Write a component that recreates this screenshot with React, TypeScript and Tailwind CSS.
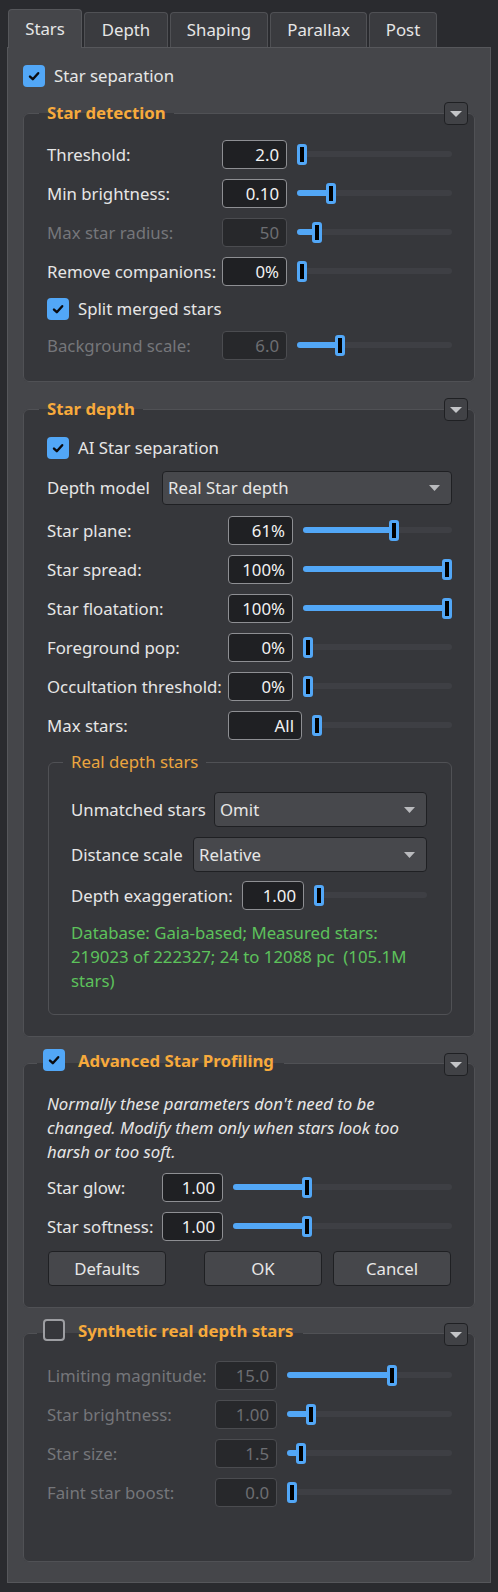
import React from 'react';

type Kids = { children?: React.ReactNode };

function Check({ on = true }: { on?: boolean }) {
  if (!on) {
    return <span className="block h-[22px] w-[22px] shrink-0 rounded-[4px] border-2 border-[#9d9ea2] bg-[#36373b]" />;
  }
  return (
    <span className="flex h-[22px] w-[22px] shrink-0 items-center justify-center rounded-[4px] bg-[#52a7f7]">
      <svg width="22" height="22" viewBox="0 0 22 22">
        <path d="M7 11.6 L9.8 14.2 L15.2 8.2" fill="none" stroke="#0b0c10" strokeWidth="2.4" strokeLinecap="round" strokeLinejoin="round" />
      </svg>
    </span>
  );
}

function CollapseBtn({ top }: { top: string }) {
  return (
    <div className={`absolute right-[7px] ${top} flex h-[23px] w-[24px] items-center justify-center rounded-[4px] border border-[#1f2023] bg-[#414246]`}>
      <svg width="12" height="6" viewBox="0 0 12 6">
        <path d="M0 0 H12 L6 6 Z" fill="#c4c5c8" />
      </svg>
    </div>
  );
}

function NumBox({ value, w, off = false }: { value: string; w: string; off?: boolean }) {
  return (
    <div
      className={`${w} h-[29px] shrink-0 rounded-[4px] border pr-[7px] text-right leading-[27px] ${
        off ? 'border-[#4b4c50] bg-[#27282b] text-[#6d6e72]' : 'border-[#8e8f93] bg-[#1f2023] text-[#f2f2f2]'
      }`}
    >
      {value}
    </div>
  );
}

function Slider({ v }: { v: number }) {
  return (
    <div className="relative ml-[10px] h-[29px] flex-1">
      <div className="absolute inset-x-0 top-[11px] h-[6px] rounded-full bg-[#3e3f44]" />
      {v > 0 && (
        <div
          className="absolute left-0 top-[11px] h-[6px] rounded-full bg-[#52a7f7]"
          style={{ width: `calc(${v} * (100% - 10px) + 6px)` }}
        />
      )}
      <div
        className="absolute top-[4px] h-[21px] w-[10px] rounded-[3px] border-[3px] border-[#52a7f7] bg-black"
        style={{ left: `calc(${v} * (100% - 10px))` }}
      />
    </div>
  );
}

function NumRow({ label, lw, iw, value, v, off = false }: { label: string; lw: string; iw: string; value: string; v: number; off?: boolean }) {
  return (
    <div className="flex h-[29px] items-center">
      <span className={`${lw} shrink-0 whitespace-nowrap ${off ? 'text-[#75767a]' : ''}`}>{label}</span>
      <NumBox value={value} w={iw} off={off} />
      <Slider v={v} />
    </div>
  );
}

function Combo({ value }: { value: string }) {
  return (
    <div className="flex h-full flex-1 items-center justify-between rounded-[4px] border border-[#1f2023] bg-[#47484c] pl-[5px] pr-[11px]">
      <span>{value}</span>
      <svg width="11" height="6" viewBox="0 0 11 6">
        <path d="M0 0 H11 L5.5 6 Z" fill="#b9babd" />
      </svg>
    </div>
  );
}

function CheckRow({ label }: { label: string }) {
  return (
    <div className="flex h-[25px] items-center gap-[9px]">
      <Check />
      <span>{label}</span>
    </div>
  );
}

function Btn({ label, cls }: { label: string; cls?: string }) {
  return (
    <div className={`flex h-[35px] w-[118px] items-center justify-center rounded-[4px] border border-[#1f2023] bg-[#46474b] ${cls ?? ''}`}>
      {label}
    </div>
  );
}

function TitleLegend({ title }: { title: string }) {
  return <legend className="ml-[-8px] px-[8px] font-bold leading-[22px] text-[#f7aa3c]">{title}</legend>;
}

function CheckLegend({ title, on }: { title: string; on: boolean }) {
  return (
    <legend className="ml-[-10px] pl-[6px] pr-[10px]">
      <div className="flex h-[29px] items-start gap-[13px]">
        <Check on={on} />
        <span className="font-bold leading-[24px] text-[#f7aa3c]">{title}</span>
      </div>
    </legend>
  );
}

function Group({ legend, wrap, box, btnTop, children }: Kids & { legend: React.ReactNode; wrap: string; box: string; btnTop: string }) {
  return (
    <div className={`relative ${wrap}`}>
      <fieldset className={`rounded-[6px] border border-[#505155] bg-[#36373b] pl-[23px] pr-[22px] ${box}`}>
        {legend}
        {children}
      </fieldset>
      <CollapseBtn top={btnTop} />
    </div>
  );
}

const tabs = [
  { name: 'Stars', w: 'w-[74px]' },
  { name: 'Depth', w: 'w-[84px]' },
  { name: 'Shaping', w: 'w-[98px]' },
  { name: 'Parallax', w: 'w-[97px]' },
  { name: 'Post', w: 'w-[68px]' },
];

export default function App() {
  return (
    <div className="h-[1592px] w-[498px] overflow-hidden bg-[#2a2b2f] pt-[9px] font-['Noto_Sans',_'Open_Sans',_sans-serif] text-[16.8px] text-[#e6e6e6]">
      <div className="flex h-[38px] items-end gap-[2px] pl-[8px]">
        {tabs.map((t, i) =>
          i === 0 ? (
            <div
              key={t.name}
              className={`${t.w} relative z-10 -mb-px flex h-[39px] items-center justify-center rounded-t-[4px] border border-b-0 border-[#56575b] bg-[#45464a]`}
            >
              {t.name}
            </div>
          ) : (
            <div
              key={t.name}
              className={`${t.w} flex h-[35px] items-center justify-center rounded-t-[4px] border border-b-0 border-[#505155] bg-[#3a3b3f]`}
            >
              {t.name}
            </div>
          ),
        )}
      </div>

      <div className="mx-[7px] border border-[#56575b] bg-[#45464a] px-[15px] pb-[20px] pt-[16px]">
        <div className="flex h-[23px] items-center gap-[9px]">
          <Check />
          <span>Star separation</span>
        </div>

        <Group legend={<TitleLegend title="Star detection" />} wrap="mt-[15px]" box="pt-[16px] pb-[21px]" btnTop="top-0">
          <div className="flex flex-col gap-[10px]">
            <NumRow label="Threshold:" lw="w-[175px]" iw="w-[65px]" value="2.0" v={0} />
            <NumRow label="Min brightness:" lw="w-[175px]" iw="w-[65px]" value="0.10" v={0.2} />
            <NumRow label="Max star radius:" lw="w-[175px]" iw="w-[65px]" value="50" v={0.1} off />
            <NumRow label="Remove companions:" lw="w-[175px]" iw="w-[65px]" value="0%" v={0} />
            <CheckRow label="Split merged stars" />
            <NumRow label="Background scale:" lw="w-[175px]" iw="w-[65px]" value="6.0" v={0.264} off />
          </div>
        </Group>

        <Group legend={<TitleLegend title="Star depth" />} wrap="mt-[16px]" box="pt-[15px] pb-[21px]" btnTop="top-0">
          <div className="flex flex-col gap-[10px]">
            <CheckRow label="AI Star separation" />
            <div className="mt-px flex h-[34px] items-center">
              <span className="w-[115px] shrink-0">Depth model</span>
              <Combo value="Real Star depth" />
            </div>
            <div className="mt-px">
              <NumRow label="Star plane:" lw="w-[181px]" iw="w-[65px]" value="61%" v={0.616} />
            </div>
            <NumRow label="Star spread:" lw="w-[181px]" iw="w-[65px]" value="100%" v={1} />
            <NumRow label="Star floatation:" lw="w-[181px]" iw="w-[65px]" value="100%" v={1} />
            <NumRow label="Foreground pop:" lw="w-[181px]" iw="w-[65px]" value="0%" v={0} />
            <NumRow label="Occultation threshold:" lw="w-[181px]" iw="w-[65px]" value="0%" v={0} />
            <NumRow label="Max stars:" lw="w-[181px]" iw="w-[74px]" value="All" v={0} />

            <fieldset className="ml-px mt-px rounded-[6px] border border-[#505155] pb-[21px] pl-[22px] pr-[24px] pt-[19px]">
              <legend className="ml-[-8px] px-[8px] leading-[22px] text-[#eba53f]">Real depth stars</legend>
              <div className="flex h-[35px] items-center">
                <span className="w-[143px] shrink-0">Unmatched stars</span>
                <Combo value="Omit" />
              </div>
              <div className="mt-[10px] flex h-[35px] items-center">
                <span className="w-[122px] shrink-0">Distance scale</span>
                <Combo value="Relative" />
              </div>
              <div className="mt-[9px]">
                <NumRow label="Depth exaggeration:" lw="w-[171px]" iw="w-[62px]" value="1.00" v={0} />
              </div>
              <p className="mt-[11px] leading-[24px] text-[#5dc25b]">
                Database: Gaia-based; Measured stars:
                <br />
                219023 of 222327; 24 to 12088 pc&nbsp; (105.1M
                <br />
                stars)
              </p>
            </fieldset>
          </div>
        </Group>

        <Group legend={<CheckLegend title="Advanced Star Profiling" on />} wrap="mt-[12px]" box="pt-[14px] pb-[21px]" btnTop="top-[4px]">
          <p className="italic leading-[24px]">
            Normally these parameters don&apos;t need to be
            <br />
            changed. Modify them only when stars look too
            <br />
            harsh or too soft.
          </p>
          <div className="mt-[9px] flex flex-col gap-[10px]">
            <NumRow label="Star glow:" lw="w-[115px]" iw="w-[61px]" value="1.00" v={0.33} />
            <NumRow label="Star softness:" lw="w-[115px]" iw="w-[61px]" value="1.00" v={0.33} />
            <div className="flex items-center">
              <Btn label="Defaults" cls="ml-px" />
              <div className="flex-1" />
              <Btn label="OK" />
              <Btn label="Cancel" cls="ml-[11px] mr-px" />
            </div>
          </div>
        </Group>

        <Group legend={<CheckLegend title="Synthetic real depth stars" on={false} />} wrap="mt-[11px]" box="pt-[13px] pb-[54px]" btnTop="top-[4px]">
          <div className="flex flex-col gap-[10px]">
            <NumRow label="Limiting magnitude:" lw="w-[168px]" iw="w-[62px]" value="15.0" v={0.643} off />
            <NumRow label="Star brightness:" lw="w-[168px]" iw="w-[62px]" value="1.00" v={0.123} off />
            <NumRow label="Star size:" lw="w-[168px]" iw="w-[62px]" value="1.5" v={0.058} off />
            <NumRow label="Faint star boost:" lw="w-[168px]" iw="w-[62px]" value="0.0" v={0} off />
          </div>
        </Group>
      </div>
    </div>
  );
}
